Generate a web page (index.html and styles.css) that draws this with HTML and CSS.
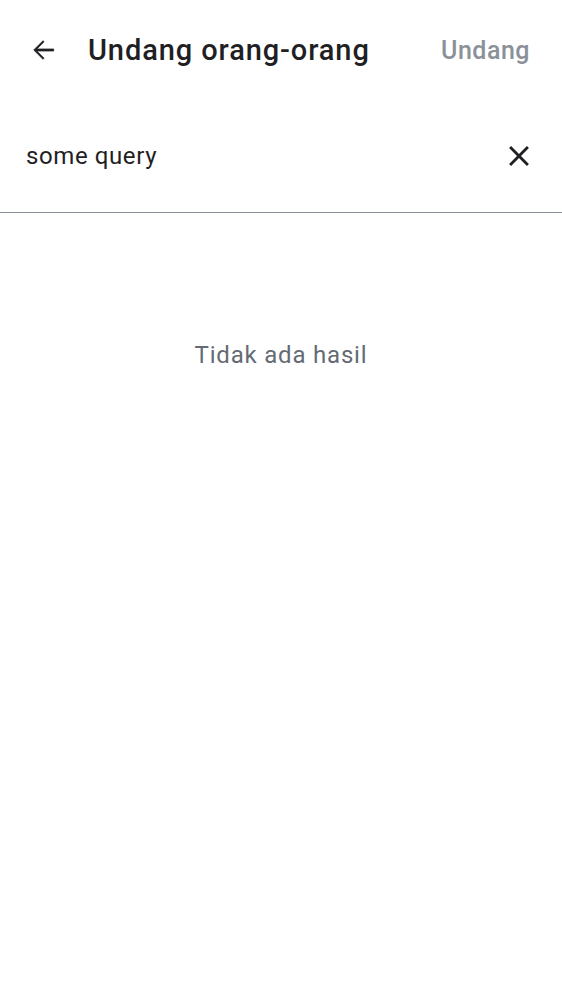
FILE: index.html
```html
<!DOCTYPE html>
<html lang="id">
<head>
<meta charset="utf-8">
<link rel="stylesheet" href="styles.css">
</head>
<body>
<header class="appbar">
  <button class="icon-btn back" aria-label="Kembali">
    <svg width="32" height="32" viewBox="0 0 24 24"><path d="M20 11.2H7.5l5.3-5.3L12 5l-7 7 7 7 .8-.9-5.3-5.3H20z" fill="#1f1f24" stroke="#1f1f24" stroke-width="0.5" stroke-linejoin="round"/></svg>
  </button>
  <h1 class="title">Undang orang-orang</h1>
  <button class="action">Undang</button>
</header>
<div class="search">
  <span class="query">some query</span>
  <button class="icon-btn clear" aria-label="Hapus">
    <svg width="34" height="34" viewBox="0 0 24 24"><path d="M19 6.41L17.59 5 12 10.59 6.41 5 5 6.41 10.59 12 5 17.59 6.41 19 12 13.41 17.59 19 19 17.59 13.41 12z" fill="#1f1f24"/></svg>
  </button>
</div>
<main class="empty">
  <p class="empty-text">Tidak ada hasil</p>
</main>
</body>
</html>
```
FILE: styles.css
```css
* { box-sizing: border-box; }
html, body { margin: 0; padding: 0; background: #fff; }
body {
  font-family: Roboto, "Noto Sans", sans-serif;
  color: #1f1f24;
  width: 562px;
  height: 1000px;
}
button { background: none; border: 0; padding: 0; font-family: inherit; cursor: pointer; }
.appbar {
  display: flex;
  align-items: center;
  height: 100px;
  padding: 0 32px 0 27px;
}
.icon-btn { display: flex; align-items: center; justify-content: center; }
.back { width: 32px; height: 32px; margin-right: 29px; }
.title {
  flex: 1;
  margin: 0;
  font-size: 29px;
  font-weight: 500;
  letter-spacing: 0.9px;
  color: #1f1f24;
}
.action {
  font-size: 25px;
  font-weight: 500;
  letter-spacing: 0.5px;
  color: #8b9199;
}
.search {
  display: flex;
  align-items: center;
  height: 113px;
  padding: 0 26px 0 26px;
  border-bottom: 1px solid #8b9199;
}
.query {
  flex: 1;
  font-size: 24px;
  letter-spacing: 0.6px;
  color: #1f1f24;
}
.clear { width: 34px; height: 34px; }
.empty {
  display: flex;
  justify-content: center;
  padding-top: 128px;
}
.empty-text {
  margin: 0;
  font-size: 24px;
  color: #646b74;
  letter-spacing: 0.8px;
}
```
